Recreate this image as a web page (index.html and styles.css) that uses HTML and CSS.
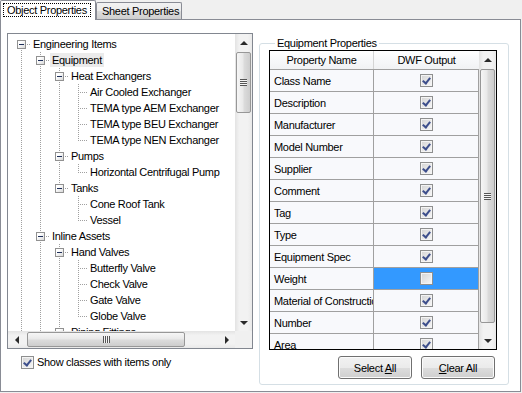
FILE: index.html
```html
<!DOCTYPE html>
<html lang="en">
<head>
    <meta charset="UTF-8">
    <title>Object Properties</title>
    <link rel="stylesheet" href="styles.css">
</head>
<body>
    <div class="window">
        <div class="tabbar">
            <div class="tab active"><span class="focus">Object Properties</span></div>
            <div class="tab">Sheet Properties</div>
        </div>

        <div class="page">
            <div class="left">
                <div class="tree">
                    <div class="tree-view">
                        <ul class="nodes">
                            <li class="node"><i class="f"><b class="box"></b></i><span class="label">Engineering Items</span></li>
                            <li class="node"><i class="r"></i><i class="t"><b class="box"></b></i><span class="label hot">Equipment</span></li>
                            <li class="node"><i class="r"></i><i class="r"></i><i class="t"><b class="box"></b></i><span class="label">Heat Exchangers</span></li>
                            <li class="node"><i class="r"></i><i class="r"></i><i class="r"></i><i class="t"></i><span class="label">Air Cooled Exchanger</span></li>
                            <li class="node"><i class="r"></i><i class="r"></i><i class="r"></i><i class="t"></i><span class="label">TEMA type AEM Exchanger</span></li>
                            <li class="node"><i class="r"></i><i class="r"></i><i class="r"></i><i class="t"></i><span class="label">TEMA type BEU Exchanger</span></li>
                            <li class="node"><i class="r"></i><i class="r"></i><i class="r"></i><i class="l"></i><span class="label">TEMA type NEN Exchanger</span></li>
                            <li class="node"><i class="r"></i><i class="r"></i><i class="t"><b class="box"></b></i><span class="label">Pumps</span></li>
                            <li class="node"><i class="r"></i><i class="r"></i><i class="r"></i><i class="l"></i><span class="label">Horizontal Centrifugal Pump</span></li>
                            <li class="node"><i class="r"></i><i class="r"></i><i class="l"><b class="box"></b></i><span class="label">Tanks</span></li>
                            <li class="node"><i class="r"></i><i class="r"></i><i class="s"></i><i class="t"></i><span class="label">Cone Roof Tank</span></li>
                            <li class="node"><i class="r"></i><i class="r"></i><i class="s"></i><i class="l"></i><span class="label">Vessel</span></li>
                            <li class="node"><i class="r"></i><i class="t"><b class="box"></b></i><span class="label">Inline Assets</span></li>
                            <li class="node"><i class="r"></i><i class="r"></i><i class="t"><b class="box"></b></i><span class="label">Hand Valves</span></li>
                            <li class="node"><i class="r"></i><i class="r"></i><i class="r"></i><i class="t"></i><span class="label">Butterfly Valve</span></li>
                            <li class="node"><i class="r"></i><i class="r"></i><i class="r"></i><i class="t"></i><span class="label">Check Valve</span></li>
                            <li class="node"><i class="r"></i><i class="r"></i><i class="r"></i><i class="t"></i><span class="label">Gate Valve</span></li>
                            <li class="node"><i class="r"></i><i class="r"></i><i class="r"></i><i class="l"></i><span class="label">Globe Valve</span></li>
                            <li class="node"><i class="r"></i><i class="r"></i><i class="t"><b class="box"></b></i><span class="label">Piping Fittings</span></li>
                        </ul>
                        <div class="vscroll">
                            <div class="sb-btn"><span class="arrow up"></span></div>
                            <div class="thumb" style="height: 61px;"><span class="grip"></span></div>
                            <div class="track"></div>
                            <div class="sb-btn"><span class="arrow down"></span></div>
                        </div>
                    </div>
                    <div class="hbar">
                        <div class="hscroll">
                            <div class="sb-btn"><span class="arrow left"></span></div>
                            <div class="thumb" style="width: 158px;"><span class="grip"></span></div>
                            <div class="track"></div>
                            <div class="sb-btn"><span class="arrow right"></span></div>
                        </div>
                        <div class="corner"></div>
                    </div>
                </div>

                <div class="check-row">
                    <span class="cb on"></span>
                    <span>Show classes with items only</span>
                </div>
            </div>

            <fieldset class="group">
                <legend>Equipment Properties</legend>
                <div class="grid">
                    <div class="grid-main">
                        <div class="grid-head">
                            <div class="hc name">Property Name</div>
                            <div class="hc dwf">DWF Output</div>
                        </div>
                        <div class="grid-row"><div class="c name">Class Name</div><div class="c dwf"><span class="cb on"></span></div></div>
                        <div class="grid-row"><div class="c name">Description</div><div class="c dwf"><span class="cb on"></span></div></div>
                        <div class="grid-row"><div class="c name">Manufacturer</div><div class="c dwf"><span class="cb on"></span></div></div>
                        <div class="grid-row"><div class="c name">Model Number</div><div class="c dwf"><span class="cb on"></span></div></div>
                        <div class="grid-row"><div class="c name">Supplier</div><div class="c dwf"><span class="cb on"></span></div></div>
                        <div class="grid-row"><div class="c name">Comment</div><div class="c dwf"><span class="cb on"></span></div></div>
                        <div class="grid-row"><div class="c name">Tag</div><div class="c dwf"><span class="cb on"></span></div></div>
                        <div class="grid-row"><div class="c name">Type</div><div class="c dwf"><span class="cb on"></span></div></div>
                        <div class="grid-row"><div class="c name">Equipment Spec</div><div class="c dwf"><span class="cb on"></span></div></div>
                        <div class="grid-row"><div class="c name">Weight</div><div class="c dwf selected"><span class="cb"></span></div></div>
                        <div class="grid-row"><div class="c name">Material of Construction</div><div class="c dwf"><span class="cb on"></span></div></div>
                        <div class="grid-row"><div class="c name">Number</div><div class="c dwf"><span class="cb on"></span></div></div>
                        <div class="grid-row"><div class="c name">Area</div><div class="c dwf"><span class="cb on"></span></div></div>
                    </div>
                    <div class="vscroll">
                        <div class="sb-btn"><span class="arrow up"></span></div>
                        <div class="thumb" style="height: 254px;"><span class="grip"></span></div>
                        <div class="track"></div>
                        <div class="sb-btn"><span class="arrow down"></span></div>
                    </div>
                </div>
                <div class="buttons">
                    <button class="btn" type="button">Select <u>A</u>ll</button>
                    <button class="btn" type="button"><u>C</u>lear All</button>
                </div>
            </fieldset>
        </div>
    </div>
</body>
</html>
```

FILE: styles.css
```css
body {
    margin: 0;
    background-color: #f0f0f0;
    font-family: "Liberation Sans", Arial, sans-serif;
    font-size: 11px;
    letter-spacing: -0.3px;
    color: #000;
}

.window {
    width: 521px;
    height: 392px;
}

/* tabs */
.tabbar {
    display: flex;
    align-items: flex-end;
    height: 19px;
    border-bottom: 1px solid #898c95;
}

.tab {
    box-sizing: border-box;
    display: flex;
    align-items: center;
    border: 1px solid #898c95;
    border-bottom: none;
    border-radius: 2px 2px 0 0;
}

.tab.active {
    width: 96px;
    height: 20px;
    margin-bottom: -1px;
    padding: 2px 0 2px 2px;
    align-items: flex-start;
    background-color: #ffffff;
}

.tab.active .focus {
    border: 1px dotted #000;
    padding: 0 3px;
    line-height: 12px;
}

.tab:not(.active) {
    width: 86px;
    height: 17px;
    padding: 0 0 0 5px;
    background: linear-gradient(#f2f2f2, #ebebeb 50%, #dddddd 51%, #cfcfcf);
}

/* page */
.page {
    box-sizing: border-box;
    display: flex;
    align-items: flex-start;
    gap: 6px;
    height: 372px;
    padding: 13px 11px 0 6px;
    background-color: #ffffff;
    border: 1px solid #898c95;
    border-top: none;
}

.left {
    display: flex;
    flex-direction: column;
}

/* tree */
.tree {
    box-sizing: border-box;
    width: 246px;
    border: 1px solid #828790;
    background-color: #ffffff;
}

.tree-view {
    display: flex;
    height: 297px;
}

.nodes {
    flex: 1;
    list-style: none;
    margin: 0;
    padding: 2px 0 0 4px;
    overflow: hidden;
}

.node {
    display: flex;
    align-items: center;
    height: 16px;
    white-space: nowrap;
}

.node i {
    flex: none;
    box-sizing: border-box;
    display: flex;
    width: 19px;
    height: 16px;
    padding: 4px 0 0 5px;
    background-repeat: no-repeat;
}

.node .r {
    background-image: repeating-linear-gradient(to bottom, #a0a0a0 0 1px, transparent 1px 2px);
    background-position: 9px 0;
    background-size: 1px 16px;
}

.node .t {
    background-image:
        repeating-linear-gradient(to bottom, #a0a0a0 0 1px, transparent 1px 2px),
        repeating-linear-gradient(to right, #a0a0a0 0 1px, transparent 1px 2px);
    background-position: 9px 0, 11px 8px;
    background-size: 1px 16px, 8px 1px;
}

.node .l {
    background-image:
        repeating-linear-gradient(to bottom, #a0a0a0 0 1px, transparent 1px 2px),
        repeating-linear-gradient(to right, #a0a0a0 0 1px, transparent 1px 2px);
    background-position: 9px 0, 11px 8px;
    background-size: 1px 9px, 8px 1px;
}

.node .f {
    background-image:
        repeating-linear-gradient(to bottom, #a0a0a0 0 1px, transparent 1px 2px),
        repeating-linear-gradient(to right, #a0a0a0 0 1px, transparent 1px 2px);
    background-position: 9px 8px, 11px 8px;
    background-size: 1px 8px, 8px 1px;
}

.box {
    box-sizing: border-box;
    display: flex;
    align-items: center;
    justify-content: center;
    width: 9px;
    height: 9px;
    border: 1px solid #919191;
    background: linear-gradient(135deg, #ffffff 30%, #d8d8d8);
}

.box::after {
    content: "";
    width: 5px;
    height: 1px;
    background-color: #1e2f5a;
}

.label {
    padding: 0 2px;
    line-height: 14px;
}

.label.hot {
    background-color: #ebebeb;
}

/* scrollbars */
.vscroll {
    flex: none;
    display: flex;
    flex-direction: column;
    width: 17px;
    background: linear-gradient(to right, #e3e3e3, #f2f2f2 25%, #f2f2f2 75%, #e9e9e9);
}

.hbar {
    display: flex;
    height: 17px;
}

.hscroll {
    flex: 1;
    display: flex;
    background: linear-gradient(#e3e3e3, #f2f2f2 25%, #f2f2f2 75%, #e9e9e9);
}

.corner {
    width: 17px;
    background-color: #f0f0f0;
}

.sb-btn {
    flex: none;
    display: flex;
    align-items: center;
    justify-content: center;
    width: 17px;
    height: 17px;
}

.track {
    flex: 1;
}

.thumb {
    flex: none;
    box-sizing: border-box;
    display: flex;
    align-items: center;
    justify-content: center;
    border: 1px solid #979797;
    border-radius: 2px;
}

.vscroll .thumb {
    margin: 1px 1px 0;
    background: linear-gradient(to right, #f6f6f6, #e9e9e9 45%, #dbdbdb 55%, #cdcdcd);
}

.hscroll .thumb {
    margin: 1px 0 1px 2px;
    background: linear-gradient(#f6f6f6, #e9e9e9 45%, #dbdbdb 55%, #cdcdcd);
}

.vscroll .grip {
    width: 7px;
    height: 7px;
    background: repeating-linear-gradient(to bottom, #555 0 1px, #f4f4f4 1px 2px);
}

.hscroll .grip {
    width: 7px;
    height: 7px;
    background: repeating-linear-gradient(to right, #555 0 1px, #f4f4f4 1px 2px);
}

.arrow {
    width: 0;
    height: 0;
    border: 4px solid transparent;
}

.arrow.up {
    border-top-width: 0;
    border-bottom-color: #2a2a2a;
}

.arrow.down {
    border-bottom-width: 0;
    border-top-color: #2a2a2a;
}

.arrow.left {
    border-left-width: 0;
    border-right-color: #2a2a2a;
}

.arrow.right {
    border-right-width: 0;
    border-left-color: #2a2a2a;
}

/* checkboxes */
.cb {
    flex: none;
    box-sizing: border-box;
    display: inline-flex;
    align-items: center;
    justify-content: center;
    width: 13px;
    height: 13px;
    border: 1px solid #8e8f8f;
    background: linear-gradient(135deg, #d4d4d4, #f7f7f7);
    box-shadow: inset 0 0 0 1px #f4f4f4;
}

.cb.on::after {
    content: "";
    width: 3px;
    height: 6px;
    margin-top: -2px;
    border: solid #3d4f8c;
    border-width: 0 2px 2px 0;
    transform: rotate(38deg);
}

.check-row {
    display: flex;
    align-items: center;
    gap: 3px;
    margin-top: 7px;
    padding-left: 14px;
    line-height: 13px;
}

/* group box */
.group {
    box-sizing: border-box;
    width: 250px;
    margin: 4px 0 0;
    padding: 0 11px 5px 9px;
    border: 1px solid #d5dfe5;
    border-radius: 3px;
}

.group legend {
    margin-left: 6px;
    padding: 0 2px;
    line-height: 13px;
}

.grid {
    display: flex;
    height: 300px;
    border: 1px solid #000;
    box-sizing: border-box;
}

.grid-main {
    width: 209px;
    overflow: hidden;
}

.grid-head,
.grid-row {
    display: flex;
}

.grid-head {
    height: 19px;
    border-bottom: 1px solid #a0a0a0;
    box-sizing: border-box;
    background: linear-gradient(#ffffff, #f7f8fa 50%, #f1f2f4);
}

.hc {
    display: flex;
    align-items: center;
    justify-content: center;
}

.hc.name {
    width: 104px;
    border-right: 1px solid #d5d5d5;
    box-sizing: border-box;
}

.hc.dwf {
    width: 105px;
}

.grid-row {
    height: 22px;
    box-sizing: border-box;
    border-bottom: 1px solid #a0a0a0;
    background-color: #f8f9fc;
}

.c {
    box-sizing: border-box;
    display: flex;
    align-items: center;
    white-space: nowrap;
    overflow: hidden;
}

.c.name {
    width: 104px;
    padding-left: 4px;
    border-right: 1px solid #a0a0a0;
}

.c.dwf {
    width: 105px;
    justify-content: center;
    border-right: 1px solid #a0a0a0;
}

.c.selected {
    background-color: #3399ff;
}

.buttons {
    display: flex;
    justify-content: flex-end;
    gap: 9px;
    margin: 6px 2px 0 0;
}

.btn {
    width: 74px;
    height: 23px;
    padding: 0;
    font: inherit;
    letter-spacing: inherit;
    color: #000;
    border: 1px solid #707070;
    border-radius: 3px;
    background: linear-gradient(#f2f2f2, #ebebeb 50%, #dddddd 51%, #cfcfcf);
    box-shadow: inset 0 0 0 1px #fbfbfb;
}
```
